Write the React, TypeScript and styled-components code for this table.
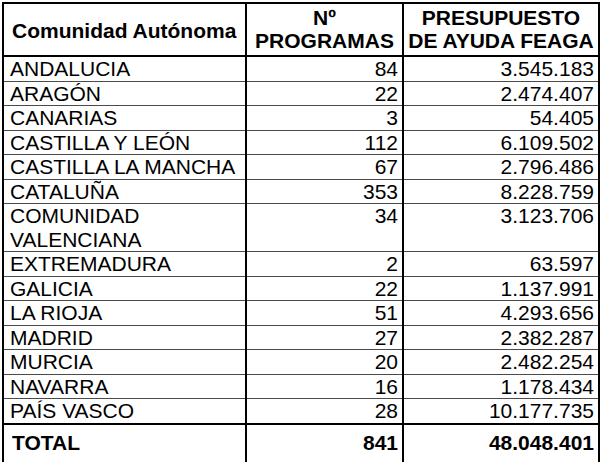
import React from "react";
import styled, { createGlobalStyle } from "styled-components";

const Global = createGlobalStyle`
  html, body {
    margin: 0;
    padding: 0;
    background: #ffffff;
    overflow: hidden;
  }
  body {
    font-family: "Liberation Sans", Arial, sans-serif;
    color: #000;
  }
`;

const Page = styled.div`
  padding: 2px 0 0 2px;
  width: 596px;
`;

const Table = styled.table`
  width: 596px;
  border-collapse: collapse;
  table-layout: fixed;
  font-family: "Liberation Sans", Arial, sans-serif;
  font-size: 21px;
  color: #000;
  border: 2px solid #000;
`;

const Col = styled.col<{ $w: number }>`
  width: ${(p) => p.$w}px;
`;

const HeadCell = styled.th<{ $center?: boolean }>`
  font-weight: 700;
  font-size: 21px;
  line-height: 23.6px;
  height: 49px;
  padding: ${(p) => (p.$center ? "0 2px 2px" : "2px 6px 0 8px")};
  text-align: ${(p) => (p.$center ? "center" : "left")};
  vertical-align: ${(p) => (p.$center ? "bottom" : "middle")};
  border-left: 2px solid #000;
  border-right: 2px solid #000;
  border-bottom: 2px solid #000;
  white-space: nowrap;
`;

const Row = styled.tr<{ $total?: boolean }>`
  font-weight: ${(p) => (p.$total ? 700 : 400)};
`;

const Cell = styled.td<{ $num?: boolean; $total?: boolean; $last?: boolean }>`
  line-height: 23.5px;
  padding: ${(p) =>
    p.$total
      ? p.$num
        ? "6px 4px 14px 4px"
        : "6px 4px 14px 8px"
      : p.$num
      ? "0 4px 0 4px"
      : "0 4px 0 6px"};
  text-align: ${(p) => (p.$num ? "right" : "left")};
  vertical-align: top;
  border-left: 2px solid #000;
  border-right: 2px solid #000;
  border-bottom: ${(p) => (p.$last ? "2px solid #000" : p.$total ? "2px solid #000" : "1px solid #4a4a4a")};
`;

type Item = { name: React.ReactNode; n: string; amount: string };

const data: Item[] = [
  { name: "ANDALUCIA", n: "84", amount: "3.545.183" },
  { name: "ARAGÓN", n: "22", amount: "2.474.407" },
  { name: "CANARIAS", n: "3", amount: "54.405" },
  { name: "CASTILLA Y LEÓN", n: "112", amount: "6.109.502" },
  { name: "CASTILLA LA MANCHA", n: "67", amount: "2.796.486" },
  { name: "CATALUÑA", n: "353", amount: "8.228.759" },
  {
    name: (
      <>
        COMUNIDAD
        <br />
        VALENCIANA
      </>
    ),
    n: "34",
    amount: "3.123.706",
  },
  { name: "EXTREMADURA", n: "2", amount: "63.597" },
  { name: "GALICIA", n: "22", amount: "1.137.991" },
  { name: "LA RIOJA", n: "51", amount: "4.293.656" },
  { name: "MADRID", n: "27", amount: "2.382.287" },
  { name: "MURCIA", n: "20", amount: "2.482.254" },
  { name: "NAVARRA", n: "16", amount: "1.178.434" },
  { name: "PAÍS VASCO", n: "28", amount: "10.177.735" },
];

export default function App() {
  return (
    <>
      <Global />
      <Page>
        <Table>
          <colgroup>
            <Col $w={243} />
            <Col $w={157} />
            <Col $w={196} />
          </colgroup>
          <thead>
            <tr>
              <HeadCell>Comunidad Autónoma</HeadCell>
              <HeadCell $center>
                Nº
                <br />
                PROGRAMAS
              </HeadCell>
              <HeadCell $center>
                PRESUPUESTO
                <br />
                DE AYUDA FEAGA
              </HeadCell>
            </tr>
          </thead>
          <tbody>
            {data.map((d, i) => (
              <Row key={i}>
                <Cell $last={i === data.length - 1}>{d.name}</Cell>
                <Cell $num $last={i === data.length - 1}>{d.n}</Cell>
                <Cell $num $last={i === data.length - 1}>{d.amount}</Cell>
              </Row>
            ))}
            <Row $total>
              <Cell $total>TOTAL</Cell>
              <Cell $total $num>841</Cell>
              <Cell $total $num>48.048.401</Cell>
            </Row>
          </tbody>
        </Table>
      </Page>
    </>
  );
}
